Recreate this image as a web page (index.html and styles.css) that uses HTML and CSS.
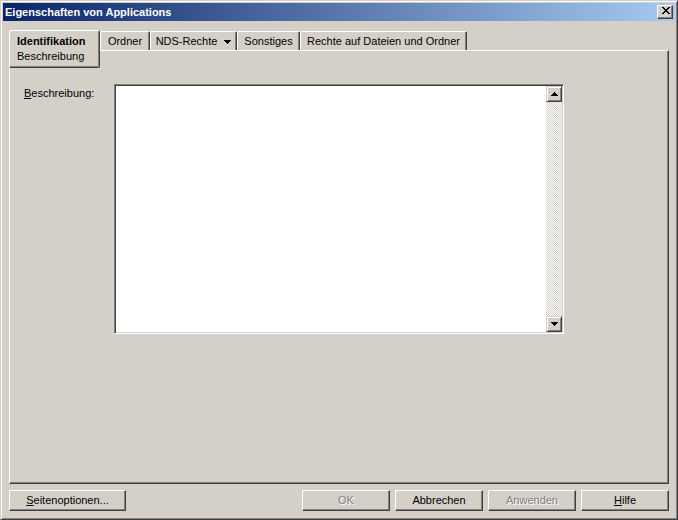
FILE: index.html
```html
<!DOCTYPE html>
<html lang="de">
<head>
<meta charset="utf-8">
<title>Eigenschaften von Applications</title>
<link rel="stylesheet" href="styles.css">
</head>
<body>
<div class="window">
  <div class="titlebar">
    <span class="title">Eigenschaften von Applications</span>
    <div class="close">
      <svg class="close-x" width="8" height="7" viewBox="0 0 8 7" shape-rendering="crispEdges">
        <rect x="0" y="0" width="2" height="1"/><rect x="6" y="0" width="2" height="1"/>
        <rect x="1" y="1" width="2" height="1"/><rect x="5" y="1" width="2" height="1"/>
        <rect x="2" y="2" width="4" height="1"/>
        <rect x="3" y="3" width="2" height="1"/>
        <rect x="2" y="4" width="4" height="1"/>
        <rect x="1" y="5" width="2" height="1"/><rect x="5" y="5" width="2" height="1"/>
        <rect x="0" y="6" width="2" height="1"/><rect x="6" y="6" width="2" height="1"/>
      </svg>
    </div>
  </div>
  <div class="body">
    <div class="tabs">
      <div class="tab-active">
        <div class="tab-main">Identifikation</div>
        <div class="tab-sub">Beschreibung</div>
      </div>
      <div class="tab tab-ordner">Ordner</div>
      <div class="tab tab-nds">NDS-Rechte
        <svg class="tab-arrow" width="7" height="4" viewBox="0 0 7 4" shape-rendering="crispEdges"><rect x="0" y="0" width="7" height="1"/><rect x="1" y="1" width="5" height="1"/><rect x="2" y="2" width="3" height="1"/><rect x="3" y="3" width="1" height="1"/></svg>
      </div>
      <div class="tab tab-sonst">Sonstiges</div>
      <div class="tab tab-rechte">Rechte auf Dateien und Ordner</div>
    </div>
    <div class="panel">
      <div class="field-row">
        <label class="field-label"><u>B</u>eschreibung:</label>
        <div class="textbox">
          <div class="text-area"></div>
          <div class="scrollbar">
            <div class="sb-btn">
              <svg width="7" height="4" viewBox="0 0 7 4" shape-rendering="crispEdges"><rect x="3" y="0" width="1" height="1"/><rect x="2" y="1" width="3" height="1"/><rect x="1" y="2" width="5" height="1"/><rect x="0" y="3" width="7" height="1"/></svg>
            </div>
            <div class="sb-track"></div>
            <div class="sb-btn">
              <svg width="7" height="4" viewBox="0 0 7 4" shape-rendering="crispEdges"><rect x="0" y="0" width="7" height="1"/><rect x="1" y="1" width="5" height="1"/><rect x="2" y="2" width="3" height="1"/><rect x="3" y="3" width="1" height="1"/></svg>
            </div>
          </div>
        </div>
      </div>
    </div>
    <div class="buttons">
      <div class="btn btn-wide"><span><u>S</u>eitenoptionen...</span></div>
      <div class="btn-group">
        <div class="btn disabled">OK</div>
        <div class="btn">Abbrechen</div>
        <div class="btn disabled">Anwenden</div>
        <div class="btn"><span><u>H</u>ilfe</span></div>
      </div>
    </div>
  </div>
</div>
</body>
</html>
```

FILE: styles.css
```css
* { box-sizing: border-box; }

html, body {
  margin: 0;
  padding: 0;
  background: #d4d0c8;
}

body {
  font-family: "Liberation Sans", Arial, sans-serif;
  font-size: 11px;
  color: #000;
}

.window {
  width: 678px;
  height: 520px;
  background: #d4d0c8;
  border: 1px solid;
  border-color: #d4d0c8 #404040 #404040 #d4d0c8;
  box-shadow: inset 1px 1px #ffffff, inset -1px -1px #808080;
  padding: 2px;
  display: flex;
  flex-direction: column;
}

.titlebar {
  height: 18px;
  flex: none;
  display: flex;
  align-items: center;
  justify-content: space-between;
  background: linear-gradient(to right, #0a246a, #a6caf0);
  padding-left: 2px;
}

.title {
  color: #fff;
  font-weight: bold;
  line-height: 18px;
  white-space: nowrap;
}

.close {
  width: 16px;
  height: 14px;
  margin-right: 2px;
  background: #d4d0c8;
  border: 1px solid;
  border-color: #ffffff #404040 #404040 #ffffff;
  box-shadow: inset -1px -1px #808080;
}

.close-x {
  display: block;
  margin: 1px 0 0 4px;
  fill: #000;
}

.body {
  flex: 1;
  display: flex;
  flex-direction: column;
  padding: 0 6px;
}

.tabs {
  margin-top: 9px;
  height: 20px;
  flex: none;
  display: flex;
  align-items: flex-end;
}

.tab-active {
  position: relative;
  z-index: 1;
  width: 91px;
  height: 38px;
  margin-bottom: -18px;
  background: #d4d0c8;
  border: 1px solid;
  border-color: #ffffff #404040 #404040 #ffffff;
  box-shadow: inset -1px -1px #808080;
  border-radius: 3px 2px 2px 0;
  padding: 3px 0 0 7px;
  line-height: 15px;
  white-space: nowrap;
}

.tab-main {
  font-weight: bold;
}

.tab {
  height: 19px;
  border-top: 1px solid #ffffff;
  border-left: 1px solid #ffffff;
  border-right: 1px solid #404040;
  box-shadow: inset -1px 0 #808080;
  border-radius: 2px 2px 0 0;
  padding-top: 3px;
  line-height: 13px;
  text-align: center;
  white-space: nowrap;
  display: flex;
  justify-content: center;
  align-items: flex-start;
}

.tab-ordner { width: 50px; }
.tab-nds { width: 87px; }
.tab-sonst { width: 63px; }
.tab-rechte { width: 167px; }

.tab-arrow {
  display: block;
  margin: 5px 0 0 7px;
  fill: #000;
}

.panel {
  height: 434px;
  flex: none;
  border: 1px solid;
  border-color: #ffffff #404040 #404040 #ffffff;
  box-shadow: inset -1px -1px #808080;
  padding: 33px 0 0 14px;
}

.field-row {
  display: flex;
  align-items: flex-start;
}

.field-label {
  width: 90px;
  padding-top: 3px;
  line-height: 13px;
}

.textbox {
  width: 450px;
  height: 250px;
  border: 1px solid;
  border-color: #808080 #ffffff #ffffff #808080;
  box-shadow: inset 1px 1px #404040, inset -1px -1px #d4d0c8;
  padding: 1px;
  display: flex;
}

.text-area {
  flex: 1;
  background: #fff;
}

.scrollbar {
  width: 16px;
  display: flex;
  flex-direction: column;
}

.sb-btn {
  width: 16px;
  height: 16px;
  flex: none;
  background: #d4d0c8;
  border: 1px solid;
  border-color: #d4d0c8 #404040 #404040 #d4d0c8;
  box-shadow: inset 1px 1px #ffffff, inset -1px -1px #808080;
  display: flex;
  align-items: center;
  justify-content: center;
}

.sb-btn svg {
  display: block;
  fill: #000;
}

.sb-track {
  flex: 1;
  background-color: #d4d0c8;
  background-image: repeating-conic-gradient(#ffffff 0 25%, #d4d0c8 0 50%);
  background-size: 2px 2px;
}

.buttons {
  margin-top: 6px;
  display: flex;
  justify-content: space-between;
}

.btn-group {
  display: flex;
  gap: 5px;
}

.btn {
  width: 88px;
  height: 21px;
  background: #d4d0c8;
  border: 1px solid;
  border-color: #ffffff #404040 #404040 #ffffff;
  box-shadow: inset -1px -1px #808080;
  display: flex;
  align-items: center;
  justify-content: center;
  line-height: 13px;
  white-space: nowrap;
}

.btn-wide {
  width: 117px;
}

.btn.disabled {
  color: #808080;
  text-shadow: 1px 1px #ffffff;
}
```
